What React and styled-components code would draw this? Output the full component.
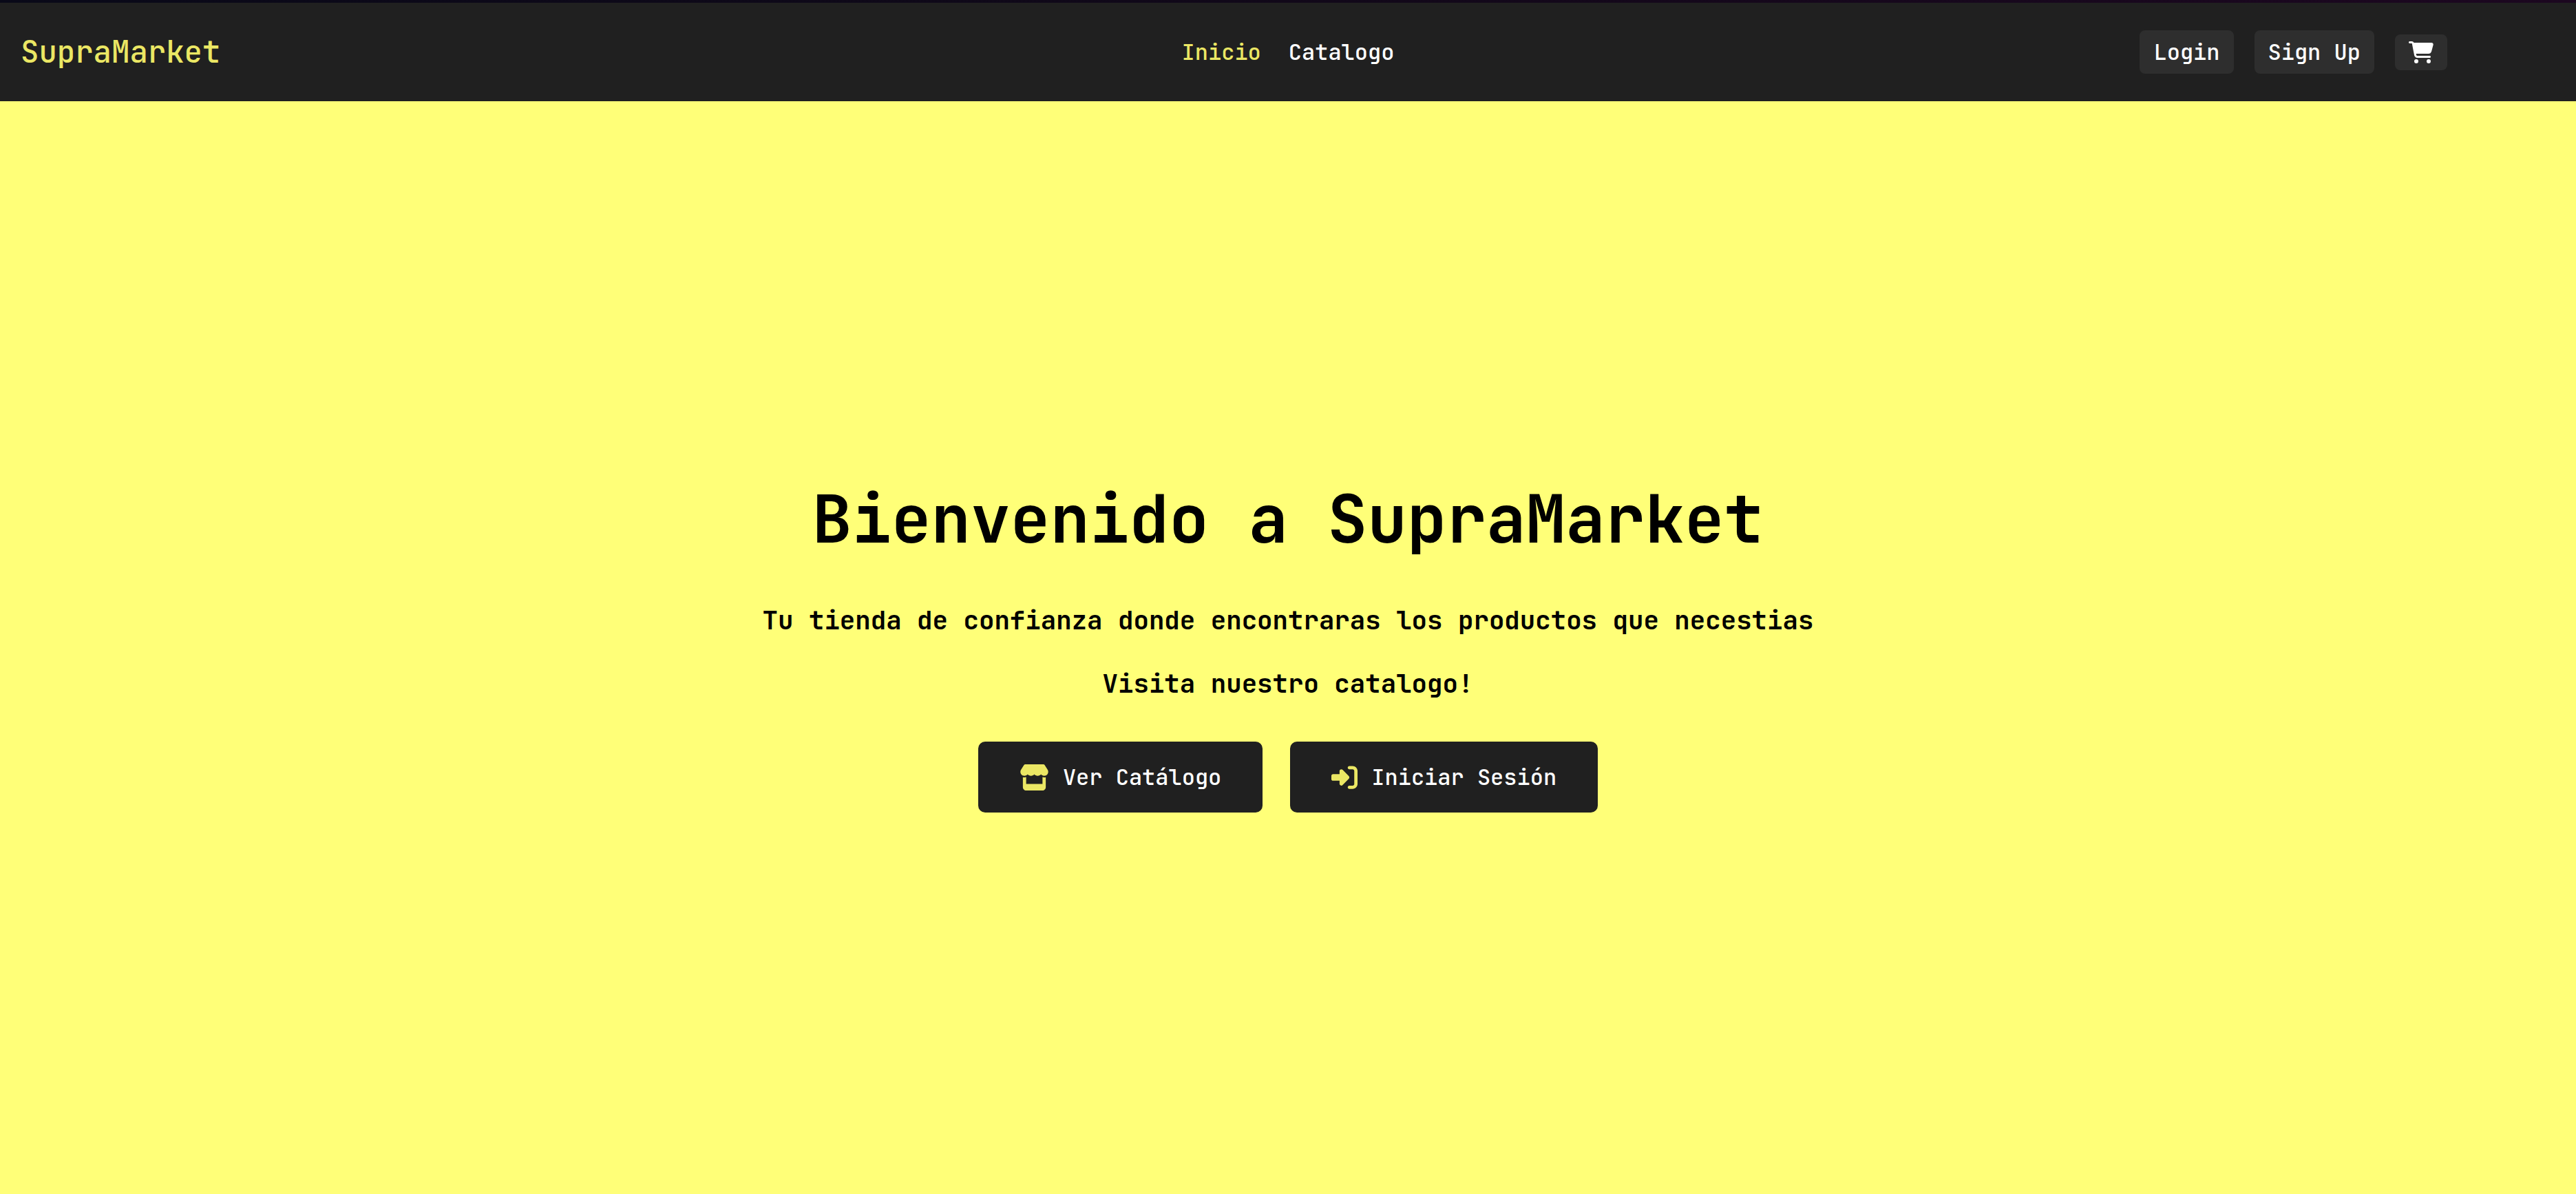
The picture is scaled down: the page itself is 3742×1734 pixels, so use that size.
import React from 'react';
import styled, { createGlobalStyle } from 'styled-components';
import { FaCartShopping, FaRightToBracket, FaStore } from 'react-icons/fa6';

const GlobalStyle = createGlobalStyle`
  * { box-sizing: border-box; }
  body {
    margin: 0;
    background: #ffff78;
    color: #000;
    font-family: 'JetBrains Mono', 'DejaVu Sans Mono', monospace;
    font-size: 32px;
    font-weight: 500;
    line-height: 43px;
  }
`;

const Page = styled.div`
  display: flex;
  flex-direction: column;
  min-height: 100vh;
`;

const Header = styled.header`
  display: grid;
  grid-template-columns: 1fr auto 1fr;
  align-items: center;
  padding: 40px 0;
  background: #202020;
`;

const TopEdge = styled.div`
  height: 4px;
  background: linear-gradient(90deg, #090918, #110819 50%, #1c0720);
`;

const Brand = styled.a`
  justify-self: start;
  padding-left: 30px;
  color: #ebe764;
  font-size: 44px;
  text-decoration: none;
`;

const Nav = styled.nav`
  display: flex;
  gap: 40px;
`;

const NavLink = styled.a`
  color: ${({ $active }) => ($active ? '#ebe764' : '#fff')};
  text-decoration: none;
`;

const Actions = styled.div`
  display: flex;
  align-items: center;
  justify-content: flex-end;
  gap: 30px;
  padding-right: 5vw;
`;

const ActionButton = styled.button`
  display: flex;
  padding: 10px 20px;
  border: 0;
  border-radius: 8px;
  background: #2e2e2e;
  color: #fff;
  font: inherit;
  cursor: pointer;
`;

const CartIcon = styled(FaCartShopping)`
  width: 36px;
  height: 32px;
`;

const StoreIcon = styled(FaStore)`
  width: 43px;
  height: 38px;
  color: #ebe764;
`;

const LoginIcon = styled(FaRightToBracket)`
  width: 38px;
  height: 38px;
  color: #ebe764;
`;

const Hero = styled.main`
  flex: 1;
  display: flex;
  flex-direction: column;
  align-items: center;
  justify-content: center;
  text-align: center;
`;

const Title = styled.h1`
  margin: 0 0 72px;
  font-size: 96px;
  line-height: 106px;
`;

const Lines = styled.div`
  display: flex;
  flex-direction: column;
  gap: 48px;
  margin-bottom: 62px;
`;

const Line = styled.h3`
  margin: 0;
  line-height: 44px;
`;

const HeroButtons = styled.div`
  display: flex;
  flex-wrap: wrap;
  justify-content: center;
  gap: 40px;
`;

const HeroButton = styled.button`
  display: flex;
  align-items: center;
  gap: 20px;
  padding: 30px 60px;
  border: 0;
  border-radius: 10px;
  background: #202020;
  color: #fff;
  font: inherit;
  cursor: pointer;
`;

export default function App() {
  return (
    <Page>
      <GlobalStyle />
      <TopEdge />
      <Header>
        <Brand href="#">SupraMarket</Brand>
        <Nav>
          <NavLink href="#" $active>Inicio</NavLink>
          <NavLink href="#catalogo">Catalogo</NavLink>
        </Nav>
        <Actions>
          <ActionButton type="button">Login</ActionButton>
          <ActionButton type="button">Sign Up</ActionButton>
          <ActionButton type="button" aria-label="Carrito">
            <CartIcon />
          </ActionButton>
        </Actions>
      </Header>
      <Hero>
        <Title>Bienvenido a SupraMarket</Title>
        <Lines>
          <Line>Tu tienda de confianza donde encontraras los productos que necestias</Line>
          <Line>Visita nuestro catalogo!</Line>
        </Lines>
        <HeroButtons>
          <HeroButton type="button"><StoreIcon />Ver Catálogo</HeroButton>
          <HeroButton type="button"><LoginIcon />Iniciar Sesión</HeroButton>
        </HeroButtons>
      </Hero>
    </Page>
  );
}
